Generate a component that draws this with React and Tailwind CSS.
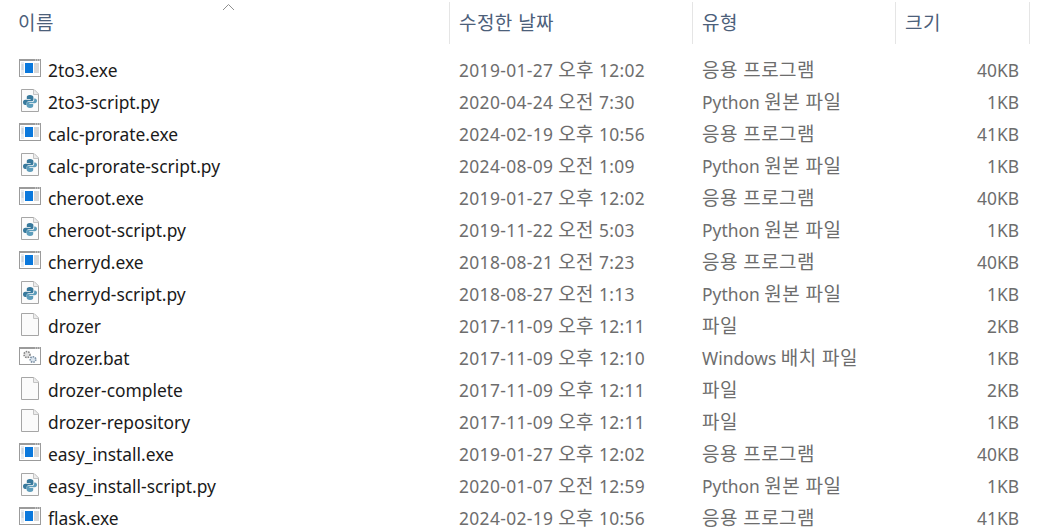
const files = [
  ["2to3.exe", "exe", "2019-01-27 오후 12:02", "응용 프로그램", "40KB"],
  ["2to3-script.py", "py", "2020-04-24 오전 7:30", "Python 원본 파일", "1KB"],
  ["calc-prorate.exe", "exe", "2024-02-19 오후 10:56", "응용 프로그램", "41KB"],
  ["calc-prorate-script.py", "py", "2024-08-09 오전 1:09", "Python 원본 파일", "1KB"],
  ["cheroot.exe", "exe", "2019-01-27 오후 12:02", "응용 프로그램", "40KB"],
  ["cheroot-script.py", "py", "2019-11-22 오전 5:03", "Python 원본 파일", "1KB"],
  ["cherryd.exe", "exe", "2018-08-21 오전 7:23", "응용 프로그램", "40KB"],
  ["cherryd-script.py", "py", "2018-08-27 오전 1:13", "Python 원본 파일", "1KB"],
  ["drozer", "file", "2017-11-09 오후 12:11", "파일", "2KB"],
  ["drozer.bat", "bat", "2017-11-09 오후 12:10", "Windows 배치 파일", "1KB"],
  ["drozer-complete", "file", "2017-11-09 오후 12:11", "파일", "2KB"],
  ["drozer-repository", "file", "2017-11-09 오후 12:11", "파일", "1KB"],
  ["easy_install.exe", "exe", "2019-01-27 오후 12:02", "응용 프로그램", "40KB"],
  ["easy_install-script.py", "py", "2020-01-07 오전 12:59", "Python 원본 파일", "1KB"],
  ["flask.exe", "exe", "2024-02-19 오후 10:56", "응용 프로그램", "41KB"],
];

// hangul runs are set larger, the CJK face is narrower than the one in the picture
function Mixed({ text }) {
  return text.split(/([\uac00-\ud7a3]+(?: [\uac00-\ud7a3]+)*)/).map((part, i) =>
    /[\uac00-\ud7a3]/.test(part) ? (
      <span key={i} className="text-[19px] leading-none tracking-[0.45px]">{part}</span>
    ) : (
      <span key={i}>{part}</span>
    )
  );
}

function WindowFrame({ children }) {
  return (
    <svg width="22" height="18" viewBox="0 0 22 18" className="block">
      <rect width="22" height="18" fill="#9b9b9b" />
      <rect x="1" y="2" width="20" height="15" fill="#fff" />
      <path d="M16 1h1M18 1h1M20 1h1" stroke="#e4e4e4" strokeWidth="1" />
      {children}
    </svg>
  );
}

function ExeIcon() {
  return (
    <WindowFrame>
      <rect x="2" y="3" width="3" height="13" fill="#e6ebf0" />
      <path d="M2.5 6h2M2.5 8h2M2.5 10h2" stroke="#a9bccd" strokeWidth="1" />
      <rect x="6" y="4" width="8" height="10" fill="#0a78dc" />
      <path d="M15 5h5M15 7h5M15 9h5M15 11h5M15 13h5" stroke="#b0b0b0" strokeWidth="1" />
    </WindowFrame>
  );
}

function PageIcon({ children }) {
  return (
    <svg width="18" height="23" viewBox="0 0 18 23" className="block">
      <path d="M0.5 0.5H13L17.5 5V22.5H0.5Z" fill="#fbfbfb" stroke="#a6a6a6" />
      <path d="M12.5 0.5V5.5H17.5" fill="#ececec" stroke="#c4c4c4" />
      {children}
    </svg>
  );
}

function PyIcon() {
  return (
    <PageIcon>
      <path d="M9 6C6.4 6 5.8 7 5.8 8.2V10H9.6V10.8H4.2C2.9 10.8 2 11.8 2 13.2C2 14.6 2.8 16 4.2 16H5.6V14.2C5.6 13 6.6 12.2 7.8 12.2H10.8C11.8 12.2 12.4 11.5 12.4 10.6V8.2C12.4 7 11.2 6 9 6Z" fill="#38799c" />
      <path d="M9 19C11.6 19 12.2 18 12.2 16.8V15H8.4V14.2H13.8C15.1 14.2 16 13.2 16 11.8C16 10.4 15.2 9.4 13.8 9.4H13.2V11C13.2 12.2 12.2 13 11 13H7.2C6.2 13 5.6 13.7 5.6 14.6V16.8C5.6 18 6.8 19 9 19Z" fill="#5d9dbb" />
    </PageIcon>
  );
}

function BatIcon() {
  return (
    <WindowFrame>
      <circle cx="8" cy="7.5" r="3" fill="#e2e2e2" stroke="#858585" strokeWidth="1.6" strokeDasharray="1.5 1" />
      <circle cx="14" cy="12.5" r="2.8" fill="#dbe5ee" stroke="#7b90a5" strokeWidth="1.6" strokeDasharray="1.5 1" />
    </WindowFrame>
  );
}

function FileIcon({ type }) {
  if (type === "exe") return <ExeIcon />;
  if (type === "py") return <PyIcon />;
  if (type === "bat") return <BatIcon />;
  return <PageIcon />;
}

export default function App() {
  return (
    <div className="h-[528px] w-[1060px] overflow-hidden bg-white font-['Noto_Sans','Noto_Sans_CJK_KR',sans-serif] text-[17.4px]">
      <div className="relative mt-[2px] grid h-[42px] grid-cols-[449px_243px_203px_135px] text-[#4c607a]">
        <span className="absolute left-[222px] top-[1px]">
          <svg width="13" height="8" viewBox="0 0 13 8" className="block">
            <path d="M1 7L6.5 1.5L12 7" fill="none" stroke="#8f8f8f" strokeWidth="1" />
          </svg>
        </span>
        <div className="flex items-center pl-[18px]"><Mixed text="이름" /></div>
        <div className="flex items-center whitespace-pre border-l border-[#e5e5e5] pl-[9px]"><Mixed text="수정한 날짜" /></div>
        <div className="flex items-center border-l border-[#e5e5e5] pl-[9px]"><Mixed text="유형" /></div>
        <div className="flex items-center border-x border-[#e5e5e5] pl-[9px]"><Mixed text="크기" /></div>
      </div>
      <div className="mt-[10px]">
        {files.map((file) => (
          <div key={file.join()} className="grid h-[32px] grid-cols-[449px_243px_203px_135px] items-center text-[#6d6d6d]">
            <div className="flex items-center text-[#1a1a1a]">
              <div className="ml-[18px] mr-[6px] flex w-[24px] justify-center pb-[4px]">
                <FileIcon type={file[1]} />
              </div>
              <span>{file[0]}</span>
            </div>
            <div className="whitespace-pre pl-[10px] tracking-[0.35px]"><Mixed text={file[2]} /></div>
            <div className="whitespace-pre pl-[10px]"><Mixed text={file[3]} /></div>
            <div className="pr-[11px] text-right">{file[4]}</div>
          </div>
        ))}
      </div>
    </div>
  );
}
